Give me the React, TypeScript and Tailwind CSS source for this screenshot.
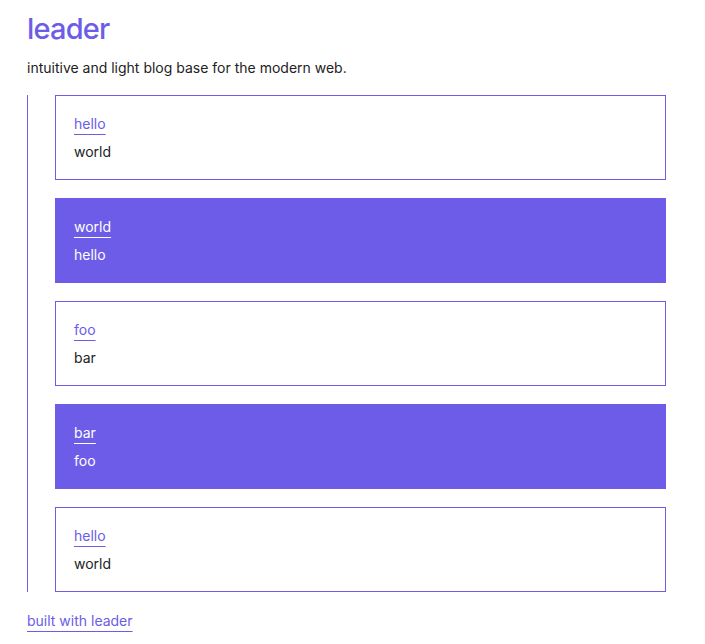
import React from "react";

type Post = { title: string; body: string; filled: boolean };

const posts: Post[] = [
  { title: "hello", body: "world", filled: false },
  { title: "world", body: "hello", filled: true },
  { title: "foo", body: "bar", filled: false },
  { title: "bar", body: "foo", filled: true },
  { title: "hello", body: "world", filled: false },
];

const PostCard: React.FC<{ post: Post }> = ({ post }) => (
  <div
    className={
      post.filled
        ? "h-[85px] border border-[#6c5ce7] bg-[#6c5ce7] px-[18px] pt-[15px] text-white"
        : "h-[85px] border border-[#6c5ce7] bg-white px-[18px] pt-[15px] text-[#222]"
    }
  >
    <a
      href="#"
      className={
        post.filled
          ? "text-[14px] leading-[24px] text-white underline decoration-1 underline-offset-[5px]"
          : "text-[14px] leading-[24px] text-[#6c5ce7] underline decoration-1 underline-offset-[5px]"
      }
    >
      {post.title}
    </a>
    <p className="mt-[4px] text-[14px] leading-[24px]">{post.body}</p>
  </div>
);

export default function App() {
  return (
    <div className="min-h-screen bg-white px-[27px] pt-[10px] font-['Inter',sans-serif] text-[#222]">
      <h1 className="text-[29px] font-medium leading-[38px] tracking-[-0.8px] text-[#6c5ce7]">leader</h1>
      <p className="mt-[10px] text-[14px] leading-[20px]">intuitive and light blog base for the modern web.</p>

      <div className="mt-[17px] w-[639px] border-l border-[#6c5ce7] pl-[27px]">
        <div className="flex flex-col gap-[18px]">
          {posts.map((p, i) => (
            <PostCard key={i} post={p} />
          ))}
        </div>
      </div>

      <a
        href="#"
        className="mt-[18px] inline-block text-[14px] leading-[22px] text-[#6c5ce7] underline decoration-1 underline-offset-[5px]"
      >
        built with leader
      </a>
    </div>
  );
}
